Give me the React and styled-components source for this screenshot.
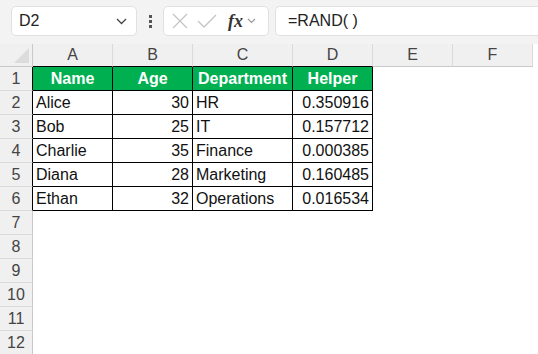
import React from "react";
import styled, { createGlobalStyle } from "styled-components";

const GlobalStyle = createGlobalStyle`
  html, body {
    margin: 0;
    padding: 0;
    background: #ffffff;
    overflow: hidden;
  }
  body {
    font-family: "Liberation Sans", Arial, sans-serif;
  }
`;

const columns = ["A", "B", "C", "D", "E", "F"];
const columnWidths = [80, 80, 100, 80, 80, 80];

const headers = ["Name", "Age", "Department", "Helper"];
const rows = [
  ["Alice", "30", "HR", "0.350916"],
  ["Bob", "25", "IT", "0.157712"],
  ["Charlie", "35", "Finance", "0.000385"],
  ["Diana", "28", "Marketing", "0.160485"],
  ["Ethan", "32", "Operations", "0.016534"],
];
const rightAligned = [false, true, false, true];

function Chevron() {
  return (
    <svg width="11" height="7" viewBox="0 0 11 7">
      <path d="M1 1 L5.5 5.5 L10 1" fill="none" stroke="#444" strokeWidth="1.3" />
    </svg>
  );
}

export default function App() {
  return (
    <Page>
      <GlobalStyle />
      <FormulaBar>
        <NameBox>
          <NameText>D2</NameText>
          <Chevron />
        </NameBox>
        <Dots>
          <Dot />
          <Dot />
          <Dot />
        </Dots>
        <ActionBox>
          <svg width="16" height="16" viewBox="0 0 16 16">
            <path d="M1 1 L15 15 M15 1 L1 15" stroke="#c4c4c4" strokeWidth="1.3" />
          </svg>
          <svg width="20" height="16" viewBox="0 0 20 16">
            <path d="M1 8 L7 14 L19 2" fill="none" stroke="#c4c4c4" strokeWidth="1.3" />
          </svg>
          <FxLabel>fx</FxLabel>
          <SmallChevron>
            <svg width="9" height="6" viewBox="0 0 9 6">
              <path d="M1 1 L4.5 4.5 L8 1" fill="none" stroke="#9a9a9a" strokeWidth="1.2" />
            </svg>
          </SmallChevron>
        </ActionBox>
        <FormulaInput>=RAND( )</FormulaInput>
      </FormulaBar>
      <Sheet $widths={columnWidths}>
        <Corner>
          <CornerTriangle />
        </Corner>
        {columns.map((c, i) => (
          <ColHeader key={c} $dark={i < 4}>
            {c}
          </ColHeader>
        ))}
        <Filler />
        {Array.from({ length: 12 }, (_, r) => {
          const rowNum = r + 1;
          const inTable = rowNum <= 6;
          return (
            <React.Fragment key={rowNum}>
              <RowHeader $dark={inTable}>{rowNum}</RowHeader>
              {columns.map((c, ci) => {
                if (rowNum === 1 && ci < 4) {
                  return <HeadCell key={c}>{headers[ci]}</HeadCell>;
                }
                if (inTable && ci < 4) {
                  return (
                    <DataCell key={c} $right={rightAligned[ci]}>
                      {rows[r - 1][ci]}
                    </DataCell>
                  );
                }
                return <EmptyCell key={c} />;
              })}
              <Filler />
            </React.Fragment>
          );
        })}
      </Sheet>
    </Page>
  );
}

const Page = styled.div`
  width: 538px;
  height: 354px;
  overflow: hidden;
  background: #ffffff;
`;

const FormulaBar = styled.div`
  height: 44px;
  background: #f3f3f3;
  display: flex;
  align-items: flex-start;
  padding-top: 6px;
  box-sizing: border-box;
`;

const NameBox = styled.div`
  margin-left: 11px;
  width: 126px;
  height: 30px;
  box-sizing: border-box;
  background: #fff;
  border: 1px solid #e1e1e1;
  border-radius: 5px;
  display: flex;
  align-items: center;
  justify-content: space-between;
  padding: 0 9px 0 7px;
`;

const NameText = styled.span`
  font-size: 16px;
  color: #222;
`;

const Dots = styled.div`
  width: 26px;
  height: 30px;
  display: flex;
  flex-direction: column;
  align-items: center;
  justify-content: center;
  gap: 2px;
`;

const Dot = styled.span`
  width: 3px;
  height: 3px;
  background: #555;
`;

const ActionBox = styled.div`
  width: 106px;
  height: 30px;
  box-sizing: border-box;
  background: #fff;
  border: 1px solid #e1e1e1;
  border-radius: 5px;
  display: flex;
  align-items: center;
  padding: 0 0 0 8px;
  gap: 9px;
`;

const FxLabel = styled.span`
  font-family: "Liberation Serif", "DejaVu Serif", serif;
  font-style: italic;
  font-weight: bold;
  font-size: 18px;
  color: #333;
  margin-left: 2px;
`;

const SmallChevron = styled.span`
  display: flex;
  margin-left: -5px;
`;

const FormulaInput = styled.div`
  margin-left: 6px;
  flex: 1;
  height: 30px;
  box-sizing: border-box;
  background: #fff;
  border: 1px solid #e1e1e1;
  border-right: none;
  border-radius: 5px 0 0 5px;
  font-size: 16px;
  color: #222;
  padding-left: 12px;
  display: flex;
  align-items: center;
`;

const Sheet = styled.div`
  display: grid;
  grid-template-columns: 33px ${(p) => p.$widths.map((w) => `${w}px`).join(" ")} 1fr;
  grid-template-rows: 23px repeat(12, 24px);
  font-size: 16px;
`;

const Corner = styled.div`
  background: #f0f0f0;
  border-right: 1px solid #c9c9c9;
  border-bottom: 1px solid #c9c9c9;
  box-sizing: border-box;
  position: relative;
`;

const CornerTriangle = styled.div`
  position: absolute;
  right: 3px;
  bottom: 3px;
  width: 0;
  height: 0;
  border-left: 15px solid transparent;
  border-bottom: 15px solid #dcdcdc;
`;

const ColHeader = styled.div`
  background: #f0f0f0;
  border-right: 1px solid #dadada;
  border-bottom: 1px solid ${(p) => (p.$dark ? "#000" : "#c9c9c9")};
  box-sizing: border-box;
  display: flex;
  align-items: center;
  justify-content: center;
  color: #444;
  font-size: 16px;
`;

const Filler = styled.div`
  background: #fff;
`;

const RowHeader = styled.div`
  background: #f0f0f0;
  border-right: 1px solid ${(p) => (p.$dark ? "#000" : "#c9c9c9")};
  border-bottom: 1px solid #dadada;
  box-sizing: border-box;
  display: flex;
  align-items: center;
  justify-content: center;
  color: #444;
  font-size: 16px;
`;

const HeadCell = styled.div`
  background: #00b050;
  color: #fff;
  font-weight: bold;
  border-right: 1px solid #000;
  border-bottom: 1px solid #000;
  box-sizing: border-box;
  display: flex;
  align-items: center;
  justify-content: center;
`;

const DataCell = styled.div`
  color: #111;
  border-right: 1px solid #000;
  border-bottom: 1px solid #000;
  box-sizing: border-box;
  display: flex;
  align-items: center;
  justify-content: ${(p) => (p.$right ? "flex-end" : "flex-start")};
  padding: 1px 3px 0;
  white-space: nowrap;
`;

const EmptyCell = styled.div`
  background: #fff;
`;
